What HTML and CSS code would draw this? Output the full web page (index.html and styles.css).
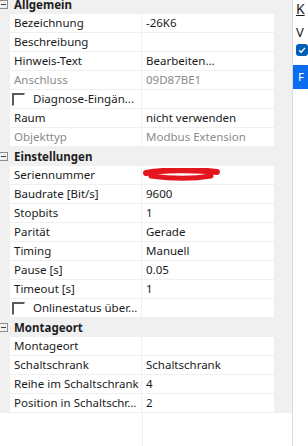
FILE: index.html
```html
<!DOCTYPE html>
<html lang="de">
<head>
  <meta charset="UTF-8">
  <title>Eigenschaften</title>
  <link rel="stylesheet" href="styles.css">
</head>
<body>
  <div class="window">
    <div class="grid-panel">
      <div class="props">
        <div class="cat"><span class="toggle"></span><span class="cat-name">Allgemein</span></div>
        <div class="row"><div class="name">Bezeichnung</div><div class="value">-26K6</div></div>
        <div class="row"><div class="name">Beschreibung</div><div class="value"></div></div>
        <div class="row"><div class="name">Hinweis-Text</div><div class="value">Bearbeiten...</div></div>
        <div class="row readonly"><div class="name">Anschluss</div><div class="value">09D87BE1</div></div>
        <div class="row"><div class="name"><span class="check"></span>Diagnose-Eingän...</div><div class="value"></div></div>
        <div class="row"><div class="name">Raum</div><div class="value">nicht verwenden</div></div>
        <div class="row readonly"><div class="name">Objekttyp</div><div class="value">Modbus Extension</div></div>

        <div class="cat"><span class="toggle"></span><span class="cat-name">Einstellungen</span></div>
        <div class="row"><div class="name">Seriennummer</div><div class="value">
          <svg class="scribble" width="80" height="16" viewBox="0 0 80 16">
            <path d="M3 5 C 20 2, 50 1, 74 4" stroke="#e4161d" stroke-width="6" fill="none" stroke-linecap="round"/>
            <path d="M8 8 C 30 11, 50 11, 68 8" stroke="#e4161d" stroke-width="5" fill="none" stroke-linecap="round"/>
          </svg>
        </div></div>
        <div class="row"><div class="name">Baudrate [Bit/s]</div><div class="value">9600</div></div>
        <div class="row"><div class="name">Stopbits</div><div class="value">1</div></div>
        <div class="row"><div class="name">Parität</div><div class="value">Gerade</div></div>
        <div class="row"><div class="name">Timing</div><div class="value">Manuell</div></div>
        <div class="row"><div class="name">Pause [s]</div><div class="value">0.05</div></div>
        <div class="row"><div class="name">Timeout [s]</div><div class="value">1</div></div>
        <div class="row"><div class="name"><span class="check"></span>Onlinestatus über...</div><div class="value"></div></div>

        <div class="cat"><span class="toggle"></span><span class="cat-name">Montageort</span></div>
        <div class="row"><div class="name">Montageort</div><div class="value"></div></div>
        <div class="row"><div class="name">Schaltschrank</div><div class="value">Schaltschrank</div></div>
        <div class="row"><div class="name">Reihe im Schaltschrank</div><div class="value">4</div></div>
        <div class="row"><div class="name">Position in Schaltschr...</div><div class="value">2</div></div>
      </div>
      <div class="desc"><div class="desc-split"></div></div>
    </div>

    <div class="side">
      <div class="side-title">K</div>
      <div class="side-label">V</div>
      <div class="side-check">
        <svg width="12" height="12" viewBox="0 0 12 12">
          <path d="M3 6.2 L5.2 8.2 L9 3.8" stroke="#ffffff" stroke-width="1.3" fill="none"/>
        </svg>
      </div>
      <div class="side-button">F</div>
    </div>
  </div>
</body>
</html>
```

FILE: styles.css
```css
* {
  margin: 0;
  padding: 0;
  box-sizing: border-box;
}

body {
  width: 308px;
  height: 446px;
  overflow: hidden;
  background-color: #ffffff;
  color: #1a1a1a;
  font-family: 'Noto Sans', 'Segoe UI', sans-serif;
  font-size: 11.5px;
}

.window {
  display: flex;
  height: 446px;
}

.grid-panel {
  width: 297px;
  display: flex;
  flex-direction: column;
  background-color: #f0f0f0;
  border-right: 1px solid #dcdcdc;
  overflow: hidden;
}

.props {
  margin-top: -5px; /* list is scrolled a bit */
  width: 274px;
}

.cat {
  height: 19px;
  display: flex;
  align-items: center;
  font-weight: bold;
  color: #1e1e1e;
}

.toggle {
  width: 9px;
  height: 9px;
  margin-left: -1px;
  margin-right: 6px;
  border: 1px solid #8e8e8e;
  position: relative;
}

.toggle::after {
  content: "";
  position: absolute;
  left: 1px;
  top: 3px;
  width: 5px;
  height: 1px;
  background-color: #404040;
}

.cat-name {
  line-height: 19px;
}

.row {
  display: flex;
  height: 18px;
  margin-bottom: 1px;
  padding-left: 10px;
  line-height: 18px;
}

.name {
  width: 131px;
  margin-right: 1px;
  padding-left: 4px;
  background-color: #ffffff;
  white-space: nowrap;
  overflow: hidden;
  display: flex;
  align-items: center;
}

.value {
  flex: 1;
  padding-left: 4px;
  background-color: #ffffff;
  white-space: nowrap;
  overflow: hidden;
}

.readonly .name,
.readonly .value {
  color: #8a8a8a;
}

.check {
  width: 13px;
  height: 13px;
  margin-left: -2px;
  margin-right: 8px;
  border-top: 2px solid #5a5a5a;
  border-left: 2px solid #5a5a5a;
  border-right: 1px solid #ffffff;
  border-bottom: 1px solid #ffffff;
}

.scribble {
  display: block;
  margin-top: 2px;
  margin-left: -3px;
}

.desc {
  flex: 1;
  width: 292px;
  background-color: #ffffff;
}

.desc-split {
  width: 143px;
  height: 100%;
  border-right: 1px solid #efefef;
}

.side {
  flex: 1;
  padding-left: 3px;
  display: flex;
  flex-direction: column;
}

.side-title {
  height: 19px;
  line-height: 17px;
  font-size: 14px;
  text-decoration: underline;
}

.side-label {
  margin-top: 6px;
  height: 15px;
  font-size: 13px;
  line-height: 15px;
}

.side-check {
  margin-top: 4px;
  width: 12px;
  height: 12px;
  border-radius: 3px;
  background-color: #005fb8;
}

.side-check svg {
  display: block;
}

.side-button {
  margin-top: 9px;
  margin-left: -3px;
  height: 24px;
  padding-left: 5px;
  line-height: 24px;
  color: #ffffff;
  background-color: #0b6cf0;
}
```
